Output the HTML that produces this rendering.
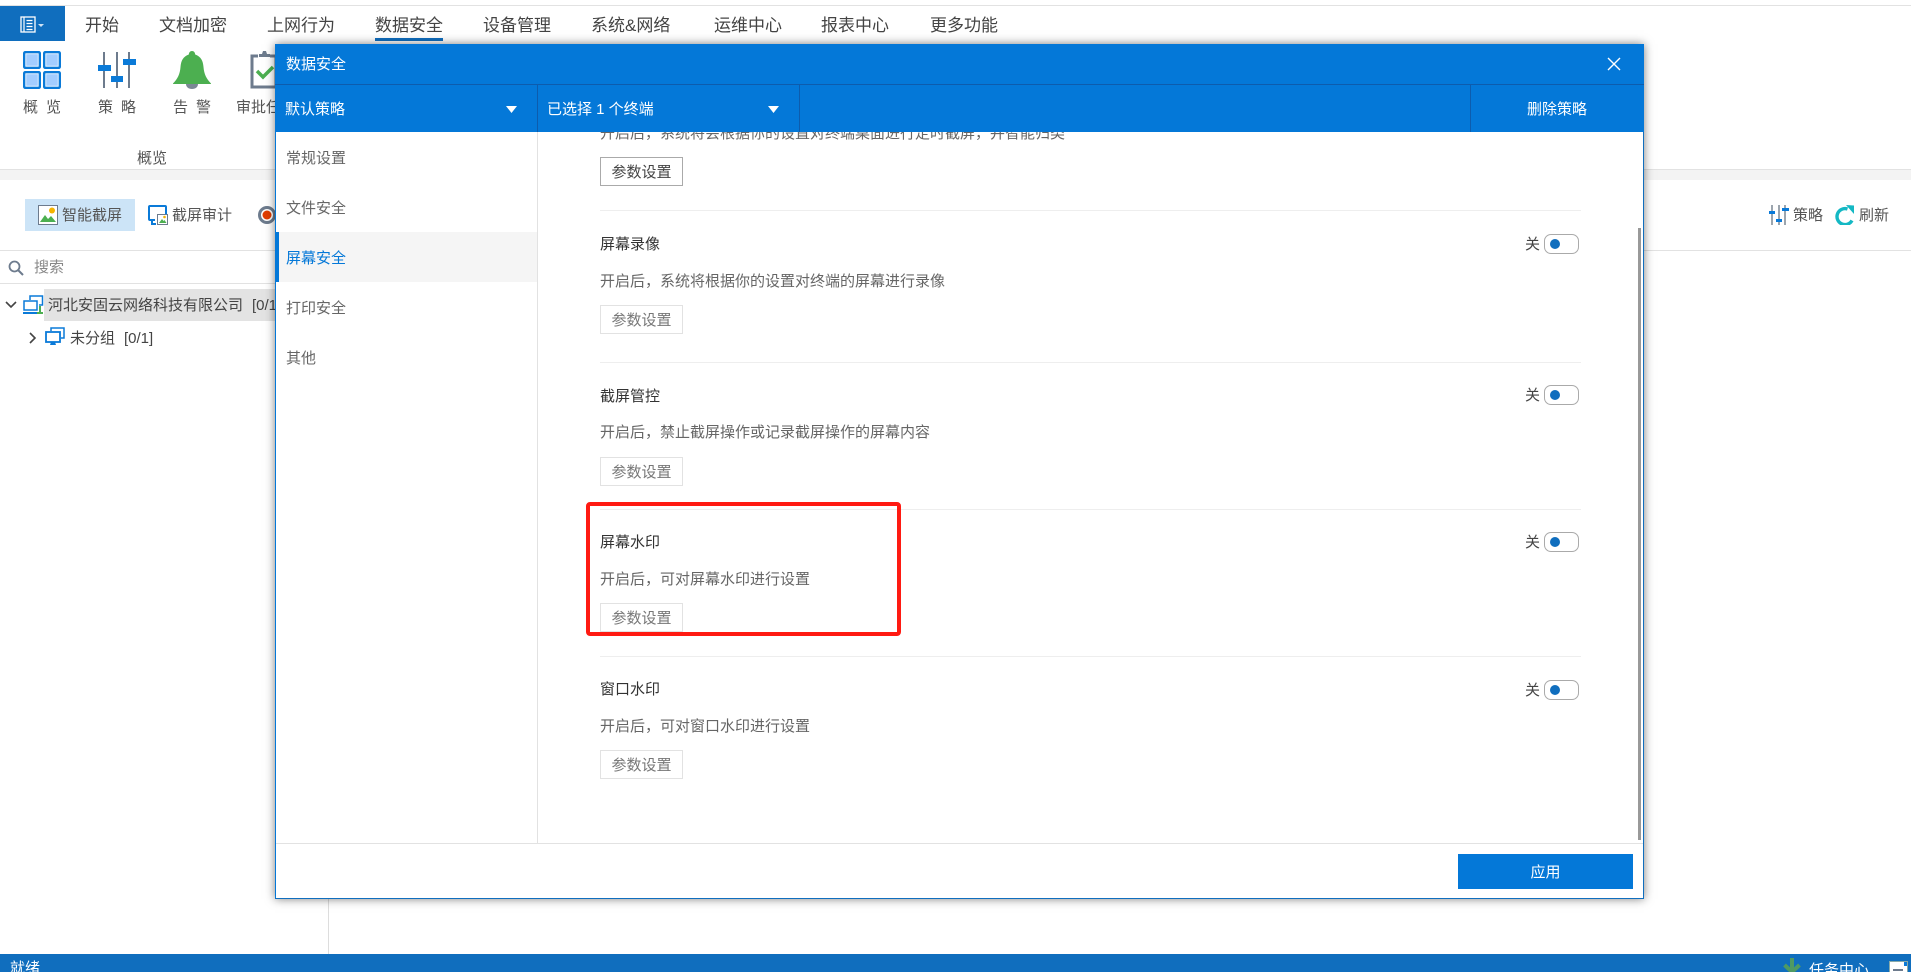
<!DOCTYPE html>
<html lang="zh-CN"><head><meta charset="utf-8"><title>数据安全</title>
<style>
html,body{margin:0;padding:0;width:1911px;height:972px;overflow:hidden;background:#fff}
body{position:relative;font-family:"Liberation Sans","Noto Sans CJK SC",sans-serif;font-size:15px;color:#555}
.a,.t{position:absolute}
.t{line-height:20px;height:20px;white-space:nowrap}
.tab{font-size:17px;color:#444;line-height:24px;height:24px;top:14px}
.ln{position:absolute;background:#e2e2e2;height:1px}
#dlg{position:absolute;left:275px;top:44px;width:1369px;height:855px;background:#fff;box-shadow:0 0 9px rgba(0,0,0,.5);overflow:hidden}
#dlg .bl{position:absolute;background:#0478d8}
.vd{position:absolute;top:41px;width:1px;height:47px;background:#0d5cad}
.m{color:#666}
.h{color:#333;left:325px}
.d{color:#666;left:325px}
.b{position:absolute;left:325px;width:81px;height:27px;border:1px solid #e2e2e2;color:#777;text-align:center;line-height:29px;font-size:15px;overflow:hidden}
.sep{position:absolute;left:325px;width:981px;height:1px;background:#eee}
.off{position:absolute;left:1250px;color:#444;line-height:20px;height:20px}
.tg{position:absolute;left:1269px;width:33px;height:18px;border:1px solid #aaa;border-radius:7px;background:#fff}
.tg i{position:absolute;left:5px;top:4px;width:10px;height:10px;border-radius:50%;background:#106ebe}
</style></head><body>

<div class="ln" style="left:0;top:5px;width:1911px"></div>
<div class="a" style="left:0;top:6px;width:65px;height:35px;background:#106ebe"></div>
<svg class="a" style="left:20px;top:16px" width="30" height="18" viewBox="0 0 30 18"><rect x="1" y="1" width="14" height="15" fill="none" stroke="#fff" stroke-width="1.3"/><path d="M4 1v15M6.500 4.500h6M6.500 7.500h6M6.500 10.500h6M6.500 13.500h6" stroke="#fff" stroke-width="1.200" fill="none"/><path d="M18 8l3 3 3-3z" fill="#cfe3f5"/></svg>

<div class="t tab" style="left:85px">开始</div>
<div class="t tab" style="left:159px">文档加密</div>
<div class="t tab" style="left:267px">上网行为</div>
<div class="t tab" style="left:375px">数据安全</div>
<div class="a" style="left:375px;top:38px;width:68px;height:3px;background:#106ebe"></div>
<div class="t tab" style="left:483px">设备管理</div>
<div class="t tab" style="left:591px">系统&amp;网络</div>
<div class="t tab" style="left:714px">运维中心</div>
<div class="t tab" style="left:821px">报表中心</div>
<div class="t tab" style="left:930px">更多功能</div>

<svg class="a" style="left:23px;top:51px" width="38" height="38" viewBox="0 0 38 38"><g fill="#a3cdff" stroke="#0a7ad8" stroke-width="2.400"><rect x="1.200" y="1.200" width="15.600" height="15.600" rx="1"/><rect x="21.200" y="1.200" width="15.600" height="15.600" rx="1"/><rect x="1.200" y="21.200" width="15.600" height="15.600" rx="1"/><rect x="21.200" y="21.200" width="15.600" height="15.600" rx="1"/></g><g fill="none" stroke="#fff" stroke-width=".8"><rect x="2.800" y="2.800" width="12.400" height="12.400"/><rect x="22.800" y="2.800" width="12.400" height="12.400"/><rect x="2.800" y="22.800" width="12.400" height="12.400"/><rect x="22.800" y="22.800" width="12.400" height="12.400"/></g></svg>
<svg class="a" style="left:98px;top:52px" width="38" height="36" viewBox="0 0 38 36"><path d="M6 0v36M19 0v36M31 0v36" stroke="#6d7b8d" stroke-width="2"/><rect x="0" y="13" width="13" height="6" fill="#0a7ad8"/><rect x="13" y="24" width="12" height="6" fill="#0a7ad8"/><rect x="25" y="7" width="13" height="6" fill="#0a7ad8"/></svg>
<svg class="a" style="left:173px;top:51px" width="38" height="38" viewBox="0 0 38 38"><path d="M19 0c2 0 3 1.500 3.200 3.500C28 5.500 30 10 30.500 16c.5 7 3 12 7.500 16.500V33H0v-.500C4.500 28 7 23 7.500 16 8 10 10 5.500 15.800 3.500 16 1.500 17 0 19 0z" fill="#4caf50"/><path d="M13 33h12c0 3-2.500 5-6 5s-6-2-6-5z" fill="#7b8794"/></svg>
<svg class="a" style="left:250px;top:50px" width="26" height="40" viewBox="0 0 26 40"><path d="M8 6H2v31h24V6h-6" fill="#fff" stroke="#6d7b8d" stroke-width="3"/><path d="M9 7V4h3l1-3h3l1 3h3v3z" fill="#6d7b8d"/><path d="M7 21l6 6 10-10" fill="none" stroke="#4caf50" stroke-width="3.500"/></svg>

<div class="t" style="left:23px;top:98px;letter-spacing:8px">概览</div>
<div class="t" style="left:98px;top:98px;letter-spacing:8px">策略</div>
<div class="t" style="left:173px;top:98px;letter-spacing:8px">告警</div>
<div class="t" style="left:236px;top:98px">审批任务</div>
<div class="t" style="left:137px;top:149px">概览</div>

<div class="a" style="left:0;top:169px;width:1911px;height:11px;background:#f3f3f3;border-top:1px solid #e2e2e2;box-sizing:border-box"></div>

<div class="a" style="left:25px;top:199px;width:110px;height:32px;background:#cce4f7"></div>
<svg class="a" style="left:38px;top:205px" width="20" height="20" viewBox="0 0 20 20"><rect x=".5" y=".5" width="19" height="19" fill="#fff" stroke="#6d7b8d"/><circle cx="14" cy="5.500" r="3" fill="#f5b400"/><path d="M2 17l5-7 3 4 3-3 5 6z" fill="#4caf50"/></svg>
<div class="t" style="left:62px;top:206px">智能截屏</div>
<svg class="a" style="left:148px;top:205px" width="20" height="20" viewBox="0 0 20 20"><path d="M7 15H2a1 1 0 0 1-1-1V2a1 1 0 0 1 1-1h15a1 1 0 0 1 1 1v7" fill="none" stroke="#0a7ad8" stroke-width="2"/><path d="M4 15v4h4" fill="none" stroke="#0a7ad8" stroke-width="2"/><rect x="9.500" y="9.500" width="10" height="10" fill="#fff" stroke="#6d7b8d"/><path d="M11 18l3-4 1.500 2 1-1 2 3z" fill="#4caf50"/><circle cx="16.500" cy="12" r="1.300" fill="#f5b400"/></svg>
<div class="t" style="left:172px;top:206px">截屏审计</div>
<svg class="a" style="left:258px;top:206px" width="18" height="18" viewBox="0 0 18 18"><circle cx="9" cy="9" r="7.500" fill="#fff" stroke="#6d7b8d" stroke-width="3"/><circle cx="9" cy="9" r="4.500" fill="#e03c00"/></svg>

<svg class="a" style="left:1769px;top:205px" width="20" height="20" viewBox="0 0 20 20"><path d="M3 0v20M10 0v20M16 0v20" stroke="#7b8794" stroke-width="1.500"/><rect x="0" y="6" width="6" height="3" fill="#0a7ad8"/><rect x="7" y="14" width="6" height="3" fill="#0a7ad8"/><rect x="13" y="3" width="7" height="3" fill="#0a7ad8"/></svg>
<div class="t" style="left:1793px;top:206px">策略</div>
<svg class="a" style="left:1835px;top:205px" width="20" height="20" viewBox="0 0 20 20"><path d="M17 15.500A8 8 0 1 1 12.500 4" fill="none" stroke="#14b8c4" stroke-width="3.400"/><path d="M11 0l8 .5V9z" fill="#14b8c4"/></svg>
<div class="t" style="left:1859px;top:206px">刷新</div>

<div class="ln" style="left:0;top:250px;width:1911px"></div>
<div class="ln" style="left:0;top:283px;width:328px"></div>
<div class="a" style="left:328px;top:251px;width:1px;height:703px;background:#ddd"></div>

<svg class="a" style="left:8px;top:260px" width="16" height="16" viewBox="0 0 16 16"><circle cx="6.500" cy="6.500" r="5" fill="none" stroke="#6d7b8d" stroke-width="1.800"/><path d="M10 10l5 5" stroke="#6d7b8d" stroke-width="2"/></svg>
<div class="t" style="left:34px;top:258px;color:#888">搜索</div>

<div class="a" style="left:44px;top:289px;width:240px;height:32px;background:#e3e3e3"></div>
<svg class="a" style="left:5px;top:301px" width="12" height="8" viewBox="0 0 12 8"><path d="M1 1l5 5 5-5" fill="none" stroke="#444" stroke-width="1.600"/></svg>
<svg class="a" style="left:23px;top:295px" width="21" height="21" viewBox="0 0 21 21"><path d="M7 5V1h12.500v9H16" fill="#fff" stroke="#0a7ad8" stroke-width="1.500"/><rect x="1" y="6" width="13" height="9" fill="#fff" stroke="#0a7ad8" stroke-width="1.500"/><path d="M0 17h15v2H0z" fill="#0a7ad8"/><path d="M17 11v6M14 18h6" stroke="#4caf50" stroke-width="2"/></svg>
<div class="t" style="left:48px;top:296px;color:#444">河北安固云网络科技有限公司</div>
<div class="t" style="left:252px;top:296px;color:#444">[0/1]</div>
<svg class="a" style="left:29px;top:332px" width="8" height="12" viewBox="0 0 8 12"><path d="M1 1l5 5-5 5" fill="none" stroke="#444" stroke-width="1.600"/></svg>
<svg class="a" style="left:45px;top:327px" width="20" height="20" viewBox="0 0 20 20"><path d="M6 4V1h13v10h-3" fill="none" stroke="#0a7ad8" stroke-width="1.500"/><rect x="1" y="5" width="14" height="10" fill="#fff" stroke="#0a7ad8" stroke-width="1.800"/><path d="M5 18h6l-1-3H6z" fill="#0a7ad8"/></svg>
<div class="t" style="left:70px;top:329px;color:#444">未分组</div>
<div class="t" style="left:124px;top:329px;color:#444">[0/1]</div>

<div class="a" style="left:0;top:954px;width:1911px;height:18px;background:#106ebe;overflow:hidden">
 <div class="t" style="left:10px;top:5px;color:#fff">就绪</div>
 <svg class="a" style="left:1783px;top:4px" width="18" height="14" viewBox="0 0 18 14"><path d="M9 0v14M1.500 7L9 14l7.500-7" fill="none" stroke="#4f9a63" stroke-width="4"/></svg>
 <div class="t" style="left:1809px;top:7px;color:#fff">任务中心</div>
 <div class="a" style="left:1889px;top:7px;width:17px;height:14px;background:#fff;border:1px solid #8aa">
  <div class="a" style="left:3px;top:7px;width:10px;height:2px;background:#6d7b8d"></div>
  <div class="a" style="right:0;top:0;width:3px;height:4px;background:#0a7ad8"></div>
 </div>
</div>

<div id="dlg">
 <div class="bl" style="left:0;top:0;width:1369px;height:88px"></div>
 <div class="a" style="left:0;top:40px;width:1369px;height:1px;background:#0d5cad"></div>
 <div class="vd" style="left:262px"></div>
 <div class="vd" style="left:524px"></div>
 <div class="vd" style="left:1195px"></div>
 <div class="t" style="left:11px;top:11px;color:#fff">数据安全</div>
 <svg class="a" style="left:1332px;top:13px" width="14" height="14" viewBox="0 0 14 14"><path d="M1 1l12 12M13 1L1 13" stroke="#fff" stroke-width="1.400"/></svg>
 <div class="t" style="left:10px;top:56px;color:#fff">默认策略</div>
 <svg class="a" style="left:231px;top:62px" width="11" height="7"><path d="M0 0h11L5.500 7z" fill="#fff"/></svg>
 <div class="t" style="left:272px;top:56px;color:#fff">已选择 1 个终端</div>
 <svg class="a" style="left:493px;top:62px" width="11" height="7"><path d="M0 0h11L5.500 7z" fill="#fff"/></svg>
 <div class="t" style="left:1252px;top:56px;color:#fff">删除策略</div>

 <!-- frame -->
 <div class="a" style="left:0;top:88px;width:1px;height:767px;background:#0478d8"></div>
 <div class="a" style="right:0;top:88px;width:1px;height:767px;background:#106ebe"></div>
 <div class="a" style="left:0;bottom:0;width:1369px;height:1px;background:#106ebe"></div>

 <!-- sidebar -->
 <div class="a" style="left:262px;top:88px;width:1px;height:711px;background:#e2e2e2"></div>
 <div class="t m" style="left:11px;top:105px">常规设置</div>
 <div class="t m" style="left:11px;top:155px">文件安全</div>
 <div class="a" style="left:1px;top:188px;width:261px;height:50px;background:#f5f5f5"></div>
 <div class="a" style="left:0;top:188px;width:4px;height:50px;background:#0478d8"></div>
 <div class="t m" style="left:11px;top:205px;color:#0478d8">屏幕安全</div>
 <div class="t m" style="left:11px;top:255px">打印安全</div>
 <div class="t m" style="left:11px;top:305px">其他</div>

 <!-- content -->
 <div class="a" style="left:263px;top:88px;width:1100px;height:711px;overflow:hidden">
  <div class="t" style="left:62px;top:-8px;color:#666">开启后，系统将会根据你的设置对终端桌面进行定时截屏，并智能归类</div>
 </div>
 <div class="b" style="top:113px;border-color:#aaa;color:#444">参数设置</div>
 <div class="sep" style="top:166px"></div>

 <div class="t h" style="top:191px">屏幕录像</div>
 <div class="t d" style="top:228px">开启后，系统将根据你的设置对终端的屏幕进行录像</div>
 <div class="b" style="top:261px">参数设置</div>
 <div class="off" style="top:191px">关</div><div class="tg" style="top:190px"><i></i></div>
 <div class="sep" style="top:318px"></div>

 <div class="t h" style="top:343px">截屏管控</div>
 <div class="t d" style="top:379px">开启后，禁止截屏操作或记录截屏操作的屏幕内容</div>
 <div class="b" style="top:413px">参数设置</div>
 <div class="off" style="top:342px">关</div><div class="tg" style="top:341px"><i></i></div>
 <div class="sep" style="top:465px"></div>

 <div class="t h" style="top:489px">屏幕水印</div>
 <div class="t d" style="top:526px">开启后，可对屏幕水印进行设置</div>
 <div class="b" style="top:559px">参数设置</div>
 <div class="off" style="top:489px">关</div><div class="tg" style="top:488px"><i></i></div>
 <div class="sep" style="top:612px"></div>

 <div class="t h" style="top:636px">窗口水印</div>
 <div class="t d" style="top:673px">开启后，可对窗口水印进行设置</div>
 <div class="b" style="top:706px">参数设置</div>
 <div class="off" style="top:637px">关</div><div class="tg" style="top:636px"><i></i></div>

 <!-- scrollbar -->
 <div class="a" style="left:1363px;top:184px;width:3px;height:612px;background:#999"></div>

 <!-- footer -->
 <div class="a" style="left:1px;top:799px;width:1367px;height:1px;background:#e2e2e2"></div>
 <div class="bl" style="left:1183px;top:810px;width:175px;height:35px;color:#fff;text-align:center;line-height:37px">应用</div>

 <!-- red annotation -->
 <div class="a" style="left:311px;top:458px;width:315px;height:134px;box-sizing:border-box;border:4px solid #ff1a12;border-radius:4px"></div>
</div>
</body></html>
